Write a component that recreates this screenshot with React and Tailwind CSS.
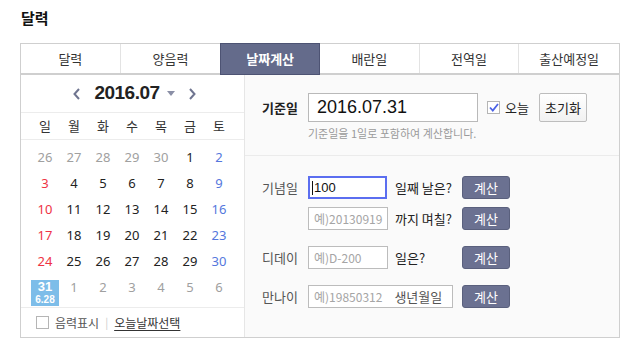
import { useState } from 'react'

const tabs = ['달력', '양음력', '날짜계산', '배란일', '전역일', '출산예정일']
const weekdays = ['일', '월', '화', '수', '목', '금', '토']

// 2016.07 grid: [day, outside month]
const weeks = [
  [[26, 1], [27, 1], [28, 1], [29, 1], [30, 1], [1, 0], [2, 0]],
  [[3, 0], [4, 0], [5, 0], [6, 0], [7, 0], [8, 0], [9, 0]],
  [[10, 0], [11, 0], [12, 0], [13, 0], [14, 0], [15, 0], [16, 0]],
  [[17, 0], [18, 0], [19, 0], [20, 0], [21, 0], [22, 0], [23, 0]],
  [[24, 0], [25, 0], [26, 0], [27, 0], [28, 0], [29, 0], [30, 0]],
  [[31, 0], [1, 1], [2, 1], [3, 1], [4, 1], [5, 1], [6, 1]],
]

const dayColor = (col, outside) => {
  if (outside) return 'text-[#a0a0a0]'
  if (col === 0) return 'text-[#ee3344]'
  if (col === 6) return 'text-[#5577dd]'
  return 'text-[#222]'
}

const CalcButton = () => (
  <button className="w-[48px] h-[23px] rounded-[3px] bg-[#6b7191] border border-[#5a607d] text-white text-[13px] leading-none">
    계산
  </button>
)

const App = () => {
  const [active] = useState(2)

  return (
    <div className="w-[628px] h-[346px] bg-white text-[#333] font-['Noto_Sans_CJK_KR','Noto_Sans',sans-serif] overflow-hidden">
      <h1 className="pl-[21px] pt-[8px] text-[15px] font-bold leading-[20px] text-[#111]">달력</h1>

      <div className="ml-[20px] mt-[15px] w-[600px] h-[295px] border border-[#cfcfcf] flex flex-col">
        {/* Tabs */}
        <div className="flex h-[31px] border-b-2 border-[#cfcfcf]">
          {tabs.map((t, i) => (
            <div
              key={t}
              className={`w-[100px] flex items-center justify-center text-[13px] ${
                i === active
                  ? 'bg-[#646b8b] text-white font-bold border border-[#4d5373] -mt-px h-[32px]'
                  : 'text-[#333] ' + (i < tabs.length - 1 && i + 1 !== active ? 'border-r border-[#e3e3e3]' : '')
              }`}
            >
              {t}
            </div>
          ))}
        </div>

        <div className="flex flex-1">
          {/* Calendar */}
          <div className="w-[224px] border-r border-[#e6e6e6] flex flex-col">
            <div className="h-[37px] flex items-center justify-center gap-[14px] pl-[4px]">
              <svg width="7" height="12" viewBox="0 0 7 12">
                <path d="M6 1 L1.5 6 L6 11" stroke="#6f7590" strokeWidth="2" fill="none" />
              </svg>
              <div className="flex items-center gap-[7px]">
                <span className="font-['Liberation_Sans',sans-serif] font-bold text-[19px] text-[#222] tracking-[-0.5px]">2016.07</span>
                <svg width="8" height="5" viewBox="0 0 8 5">
                  <path d="M0 0 L8 0 L4 5 Z" fill="#8a8fa6" />
                </svg>
              </div>
              <svg width="7" height="12" viewBox="0 0 7 12">
                <path d="M1 1 L5.5 6 L1 11" stroke="#6f7590" strokeWidth="2" fill="none" />
              </svg>
            </div>
            <div className="h-[28px] border-y border-[#ececec] grid grid-cols-[repeat(7,29px)] pl-[10px] items-center">
              {weekdays.map((w) => (
                <span key={w} className="w-[28px] text-center text-[13px] text-[#333]">{w}</span>
              ))}
            </div>
            <div className="pt-[10px] pl-[10px] h-[167px]">
              {weeks.map((wk, r) => (
                <div key={r} className="grid grid-cols-[repeat(7,29px)] h-[26px]">
                  {wk.map(([d, out], c) =>
                    r === 5 && c === 0 ? (
                      <div key={c} className="w-[28px] h-[26px] bg-[#7dbde9] text-white flex flex-col items-center font-['Liberation_Sans',sans-serif]">
                        <span className="text-[13px] font-bold leading-[14px]">31</span>
                        <span className="text-[10px] font-bold leading-[12px]">6.28</span>
                      </div>
                    ) : (
                      <span
                        key={c}
                        className={`w-[28px] text-center text-[13px] leading-[14px] font-['Noto_Sans',sans-serif] ${dayColor(c, out)}`}
                      >
                        {d}
                      </span>
                    )
                  )}
                </div>
              ))}
            </div>
            <div className="flex-1 border-t border-[#ececec] flex items-center pl-[15px] text-[12px]">
              <span className="w-[13px] h-[13px] border border-[#b5b5b5] bg-white" />
              <span className="ml-[6px] text-[#555]">음력표시</span>
              <span className="mx-[6px] text-[#ccc] text-[11px]">|</span>
              <span className="text-[#333] underline underline-offset-2">오늘날짜선택</span>
            </div>
          </div>

          {/* Date calculation */}
          <div className="flex-1 bg-[#fafafa] flex flex-col">
            <div className="h-[81px] border-b border-[#ebebeb] pt-[18px] pl-[17px]">
              <div className="flex items-center h-[29px]">
                <span className="w-[46px] text-[13px] font-bold text-[#222]">기준일</span>
                <div className="w-[170px] h-[29px] border border-[#b9b9b9] bg-white flex items-center pl-[8px] font-['Liberation_Sans',sans-serif] text-[18px] text-[#111]">
                  2016.07.31
                </div>
                <span className="ml-[9px] w-[13px] h-[13px] border border-[#b5b5b5] bg-white flex items-center justify-center">
                  <svg width="10" height="9" viewBox="0 0 10 9">
                    <path d="M1 4.5 L3.8 7.5 L9 1" stroke="#4b62e6" strokeWidth="1.8" fill="none" />
                  </svg>
                </span>
                <span className="ml-[5px] text-[13px] text-[#222]">오늘</span>
                <button className="ml-[10px] w-[48px] h-[29px] border border-[#bdbdbd] rounded-[2px] bg-gradient-to-b from-white to-[#f1f1f1] text-[13px] text-[#222]">
                  초기화
                </button>
              </div>
              <p className="ml-[46px] mt-[4px] text-[11px] text-[#9a9a9a] leading-[14px]">기준일을 1일로 포함하여 계산합니다.</p>
            </div>

            <div className="pt-[20px] pl-[17px] flex flex-col text-[13px]">
              <div className="flex items-center h-[23px]">
                <span className="w-[46px] text-[#555]">기념일</span>
                <div className="w-[79px] h-[23px] border-2 border-[#5b6ef0] bg-white flex items-center pl-[2px] text-[13px] text-[#111] font-['Liberation_Sans',sans-serif]">
                  <span className="w-px h-[14px] bg-[#111] mr-[1px]" />100
                </div>
                <span className="ml-[8px] w-[67px] text-[#222]">일째 날은?</span>
                <CalcButton />
              </div>
              <div className="flex items-center h-[23px] mt-[8px]">
                <span className="w-[46px]" />
                <div className="w-[80px] h-[23px] border border-[#bcbcbc] bg-white flex items-center pl-[5px] text-[12px] text-[#a5a5a5]">
                  예)20130919
                </div>
                <span className="ml-[7px] w-[67px] text-[#222]">까지 며칠?</span>
                <CalcButton />
              </div>
              <div className="flex items-center h-[23px] mt-[16px]">
                <span className="w-[46px] text-[#555]">디데이</span>
                <div className="w-[80px] h-[23px] border border-[#bcbcbc] bg-white flex items-center pl-[5px] text-[12px] text-[#a5a5a5]">
                  예)D-200
                </div>
                <span className="ml-[7px] w-[67px] text-[#222]">일은?</span>
                <CalcButton />
              </div>
              <div className="flex items-center h-[23px] mt-[16px]">
                <span className="w-[46px] text-[#555]">만나이</span>
                <div className="w-[145px] h-[23px] border border-[#bcbcbc] bg-white flex items-center pl-[5px] text-[12px]">
                  <span className="text-[#a5a5a5]">예)19850312</span>
                  <span className="ml-[12px] text-[#555] text-[13px]">생년월일</span>
                </div>
                <span className="ml-[9px]">
                  <CalcButton />
                </span>
              </div>
            </div>
          </div>
        </div>
      </div>
    </div>
  )
}

export default App
